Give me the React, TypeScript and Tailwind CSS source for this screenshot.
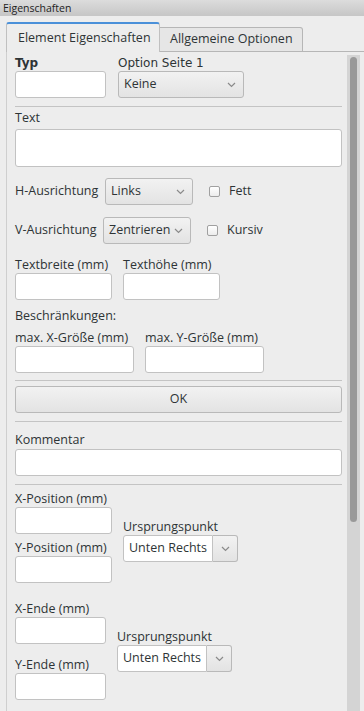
const ui = "font-['Open_Sans','Liberation_Sans',sans-serif]";

function Chevron() {
  return (
    <svg width="9" height="6" viewBox="0 0 9 6" className="shrink-0">
      <path d="M1 1 L4.5 4.5 L8 1" fill="none" stroke="#8a8a8a" strokeWidth="1.2" />
    </svg>
  );
}

function Input({ w, h = 27 }: { w: string; h?: number }) {
  return (
    <div
      className={`${w} shrink-0 rounded-[3px] border border-[#c2c2c2] bg-white`}
      style={{ height: h }}
    />
  );
}

function Select({ label, w }: { label: string; w: string }) {
  return (
    <div
      className={`${w} flex h-[27px] shrink-0 items-center justify-between rounded-[3px] border border-[#b9b9b9] bg-gradient-to-b from-[#f2f2f2] to-[#e3e3e3] pl-[5px] pr-[7px] text-[12.5px]`}
    >
      <span>{label}</span>
      <Chevron />
    </div>
  );
}

function Combo({ label }: { label: string }) {
  return (
    <div className="flex h-[27px] text-[12.5px]">
      <div className="flex w-[90px] items-center rounded-l-[3px] border border-[#c2c2c2] bg-white pl-[5px]">
        {label}
      </div>
      <div className="flex w-[25px] items-center justify-center rounded-r-[3px] border border-l-0 border-[#b9b9b9] bg-gradient-to-b from-[#f2f2f2] to-[#e3e3e3]">
        <Chevron />
      </div>
    </div>
  );
}

function Check({ label }: { label: string }) {
  return (
    <div className="flex items-center gap-[9px] text-[12.5px]">
      <div className="h-[11px] w-[11px] rounded-[2px] border border-[#a0a0a0] bg-gradient-to-b from-white to-[#ececec]" />
      <span>{label}</span>
    </div>
  );
}

function Sep() {
  return <div className="h-px bg-[#c4c4c4]" />;
}

function Label({ children }: { children: React.ReactNode }) {
  return <div className="h-[16px] text-[12.5px] leading-[16px]">{children}</div>;
}

export default function App() {
  return (
    <div className={`${ui} h-[711px] w-[364px] overflow-hidden bg-[#ededed] text-[#2e3436]`}>
      {/* title */}
      <div className="h-[16px] bg-gradient-to-b from-[#dcdcdc] to-[#c6c6c6] pl-[3px] text-[10.5px] leading-[16px] text-[#222]">
        Eigenschaften
      </div>

      {/* tabs */}
      <div className="mt-[6px] flex items-end pl-[6px]">
        <div className="flex h-[30px] w-[154px] items-center rounded-t-[3px] border-x border-t-2 border-x-[#c0c0c0] border-t-[#4a90d9] bg-[#ededed] pl-[11px] text-[12.5px]">
          Element Eigenschaften
        </div>
        <div className="flex h-[25px] w-[143px] items-center rounded-tr-[3px] border-r border-t border-b border-[#b6b6b6] bg-[#e6e6e6] pl-[10px] text-[12.5px]">
          Allgemeine Optionen
        </div>
        <div className="h-px flex-1 bg-[#b6b6b6]" />
      </div>

      {/* panel */}
      <div className="ml-[6px] flex h-[660px] border-l border-[#cfcfcf]">
        <div className="flex-1 pl-[8px] pr-[5px]">
          {/* row 1 */}
          <div className="mt-[4px] flex gap-[12px]">
            <div>
              <div className="h-[15px] font-['DejaVu_Sans',sans-serif] text-[12px] font-bold leading-[14px]">Typ</div>
              <Input w="w-[91px]" />
            </div>
            <div>
              <div className="h-[15px] font-['DejaVu_Sans',sans-serif] text-[12px] leading-[14px]">Option Seite 1</div>
              <Select label="Keine" w="w-[126px]" />
            </div>
          </div>

          <div className="mt-[8px]">
            <Sep />
          </div>

          <div className="mt-[3px]">
            <Label>Text</Label>
          </div>
          <div className="mt-[3px]">
            <Input w="w-full" h={38} />
          </div>

          <div className="mt-[11px] flex items-center">
            <span className="w-[90px] text-[12.5px]">H-Ausrichtung</span>
            <Select label="Links" w="w-[88px]" />
            <div className="ml-[16px]">
              <Check label="Fett" />
            </div>
          </div>
          <div className="mt-[12px] flex items-center">
            <span className="w-[88px] text-[12.5px]">V-Ausrichtung</span>
            <Select label="Zentrieren" w="w-[88px]" />
            <div className="ml-[16px]">
              <Check label="Kursiv" />
            </div>
          </div>

          <div className="mt-[13px] flex gap-[11px]">
            <div>
              <Label>Textbreite (mm)</Label>
              <Input w="w-[97px]" />
            </div>
            <div>
              <Label>Texthöhe (mm)</Label>
              <Input w="w-[97px]" />
            </div>
          </div>

          <div className="mt-[8px]">
            <Label>Beschränkungen:</Label>
          </div>
          <div className="mt-[6px] flex gap-[11px]">
            <div>
              <Label>max. X-Größe (mm)</Label>
              <Input w="w-[119px]" />
            </div>
            <div>
              <Label>max. Y-Größe (mm)</Label>
              <Input w="w-[119px]" />
            </div>
          </div>

          <div className="mt-[7px]">
            <Sep />
          </div>
          <div className="mt-[5px] flex h-[27px] items-center justify-center rounded-[3px] border border-[#b9b9b9] bg-gradient-to-b from-[#f2f2f2] to-[#e3e3e3] text-[12.5px]">
            OK
          </div>
          <div className="mt-[8px]">
            <Sep />
          </div>

          <div className="mt-[10px]">
            <Label>Kommentar</Label>
          </div>
          <div className="mt-px">
            <Input w="w-full" />
          </div>
          <div className="mt-[8px]">
            <Sep />
          </div>

          {/* position */}
          <div className="mt-[6px] flex gap-[11px]">
            <div>
              <Label>X-Position (mm)</Label>
              <Input w="w-[97px]" />
              <div className="mt-[6px]">
                <Label>Y-Position (mm)</Label>
              </div>
              <Input w="w-[97px]" />
            </div>
            <div className="mt-[28px]">
              <Label>Ursprungspunkt</Label>
              <Combo label="Unten Rechts" />
            </div>
          </div>

          <div className="mt-[18px] flex gap-[11px]">
            <div>
              <Label>X-Ende (mm)</Label>
              <Input w="w-[91px]" />
              <div className="mt-[13px]">
                <Label>Y-Ende (mm)</Label>
              </div>
              <Input w="w-[91px]" />
            </div>
            <div className="mt-[28px]">
              <Label>Ursprungspunkt</Label>
              <Combo label="Unten Rechts" />
            </div>
          </div>
        </div>

        {/* scrollbar */}
        <div className="mt-[3px] w-[13px] bg-[#d4d4d4] px-[3px] pt-[2px]">
          <div className="h-[465px] rounded-full bg-[#999999]" />
        </div>
        <div className="w-[4px]" />
      </div>
    </div>
  );
}
